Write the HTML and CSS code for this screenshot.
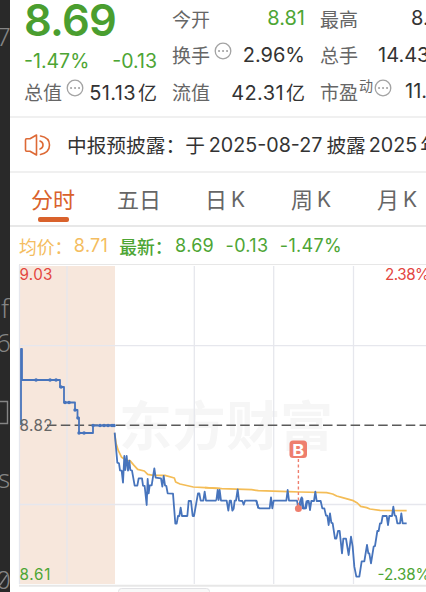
FILE: index.html
```html
<!DOCTYPE html>
<html lang="zh-CN">
<head>
<meta charset="utf-8">
<title>8.69</title>
<link rel="stylesheet" href="styles.css">
</head>
<body>
<svg class="strip" viewBox="0 0 10 592">
  <g class="code">
    <text x="-4" y="46">7</text>
    <text x="1" y="318">f</text>
    <text x="-4" y="352">6</text>
    <path d="M0 401.5H7.5V423.5H0"/>
    <text x="-2" y="488">s</text>
    <text x="-4" y="589">0</text>
    <path d="M0 585L7 575"/>
  </g>
</svg>
<main class="panel">
  <section class="quote">
    <div class="col first">
      <div class="price">8.69</div>
      <div class="row change"><span>-1.47%</span><span>-0.13</span></div>
      <div class="row"><span class="label">总值</span><svg class="more" viewBox="0 0 18 18"><circle cx="9" cy="9" r="7.8"/><path d="M5 9h.1M9 9h.1M13 9h.1"/></svg><span class="num end cap">51.13<i>亿</i></span></div>
    </div>
    <div class="col">
      <div class="row"><span class="label">今开</span><span class="num end green">8.81</span></div>
      <div class="row"><span class="label">换手</span><svg class="more" viewBox="0 0 18 18"><circle cx="9" cy="9" r="7.8"/><path d="M5 9h.1M9 9h.1M13 9h.1"/></svg><span class="num end">2.96%</span></div>
      <div class="row"><span class="label">流值</span><span class="num end cap">42.31<i>亿</i></span></div>
    </div>
    <div class="col">
      <div class="row"><span class="label wide">最高</span><span class="num high">8.</span></div>
      <div class="row"><span class="label wide">总手</span><span class="num volume">14.43</span></div>
      <div class="row"><span class="label">市盈</span><span class="sup">动</span><svg class="more tight" viewBox="0 0 18 18"><circle cx="9" cy="9" r="7.8"/><path d="M5 9h.1M9 9h.1M13 9h.1"/></svg><span class="num pe">11.</span></div>
    </div>
  </section>
  <section class="notice">
    <svg class="speaker" viewBox="0 0 28 24"><path d="M2.6 5.8Q1.5 5.8 1.5 7V17Q1.5 18.2 2.6 18.2H6L12.5 22V2L6 5.8ZM16 8Q19 9 19 12T16 16M16.5 3Q25.5 4.5 25.5 12T16.5 21.5"/></svg>
    <span class="news">中报预披露：</span><span class="news">于</span><span class="news date">2025-08-27</span><span class="news">披露</span><span class="news year">2025</span><span class="news">年</span>
  </section>
  <nav class="tabs">
    <span class="tab active">分时</span><span class="tab">五日</span><span class="tab">日<b>K</b></span><span class="tab">周<b>K</b></span><span class="tab">月<b>K</b></span>
  </nav>
  <section class="legend">
    <span class="avg">均价：</span><span class="avg value">8.71</span><span class="latest">最新：</span><span class="value">8.69</span><span class="value">-0.13</span><span class="value">-1.47%</span>
  </section>
  <svg class="chart" viewBox="10 264 416 328">
    <rect class="auction" x="19" y="266" width="96" height="318"/>
    <text class="watermark" x="119" y="446" textLength="214">东方财富</text>
    <path class="grid" d="M19.5 265V584M67 266V584M194.3 266V584M273.7 266V584M353.5 266V584M19 345.7H426M19 504.5H426"/>
    <path class="frame" d="M19 264.5H426"/>
    <path class="frame base" d="M19 585.7H426"/>
    <path class="dash" d="M47 425.3H426"/>
    <g class="average">
      <polyline transform="translate(105 380) scale(.33333)" points="29,160 33,190 40,212 50,232 58,237 65,242 75,242 85,254 98,268 118,273 128,283 145,286 180,286 208,294 212,306 225,312 265,321 300,323 345,326"/>
      <polyline transform="translate(215 380) scale(.33333)" points="-30,323 0,324 20,326 110,329 130,332 220,335 255,336"/>
      <polyline transform="translate(300 470) scale(.33333)" points="0,66 80,68 98,72 110,78 125,82 160,92 172,99 182,109 200,113 210,117 240,121 320,122"/>
    </g>
    <g class="price-line">
      <path d="M21 425V349H22V380H60V387H64V402.5H75V410H77.5V418H79V433H93V425.5H115"/>
      <path class="ticks" d="M36 380h.1M50 380h.1M56 380h.1M61 387h.1M65 402.5h.1M69 402.5h.1M75 410h.1M78 418h.1M79 433h.1M84 433h.1M93 425.5h.1M100 425.5h.1M104 425.5h.1M108 425.5h.1M112 425.5h.1M114 425.5h.1"/>
      <polyline transform="translate(105 380) scale(.33333)" points="29,158 37,248 42,250 45,271 50,272 54,308 58,228 61,270 65,228 69,272 73,242 76,270 81,272 89,317 97,317 101,295 111,295 114,317 119,318 125,375 128,297 131,340 134,316 140,316 148,265 152,293 168,295 172,320 176,288 180,316 184,318 188,340 204,341 211,431 215,431 219,408 223,408 227,383 231,408 247,408 251,363 258,363 263,408 267,408 279,340 283,340 287,362 295,362 299,335 303,362 334,362"/>
      <polyline transform="translate(215 380) scale(.33333)" points="4,362 8,330 11,360 14,330 18,362 35,362 40,392 44,362 48,362 52,392 56,386 59,362 63,362 68,328 72,362 82,363 86,374 90,362 124,362 130,385"/>
      <polyline transform="translate(215 380) scale(.33333)" points="124,362 130,383 134,385 164,385 168,352 172,385 176,362 214,362 218,330 222,362 246,362 250,385 256,362 260,352 263,385 270,385 275,362"/>
      <polyline transform="translate(300 470) scale(.33333)" points="0,115 7,85 10,115 18,115 22,93 26,93 30,120 34,93 42,93 46,65 50,93 62,93 67,115 73,115 78,137 82,137 86,165 90,130 94,158 98,160 105,206 109,206 114,183 119,183 126,250 130,206 138,206 146,255 153,200 158,230 163,290 169,320 178,320 185,274 193,274 201,225 205,250 208,250 213,280 221,230 225,228 232,183 236,183 240,160 244,160 248,138 260,138 264,165 268,138 276,138 280,110 284,136 288,138 292,160 300,160 304,130 308,160 320,160"/>
    </g>
    <path class="marker-line" d="M298.4 459V507"/>
    <circle class="marker" cx="298.4" cy="508.5" r="3.5"/>
    <rect class="marker" x="289.5" y="440.5" width="17.5" height="17.5" rx="3.5"/>
    <text class="marker-text" x="292.3" y="455.5" textLength="12" lengthAdjust="spacingAndGlyphs">B</text>
    <text class="scale red" x="19.5" y="280" textLength="33">9.03</text>
    <text class="scale red" x="385" y="280" textLength="45">2.38%</text>
    <text class="scale mid" x="19.5" y="430.5" textLength="33">8.82</text>
    <text class="scale low" x="19.5" y="580" textLength="31">8.61</text>
    <text class="scale low" x="377.5" y="580" textLength="53">-2.38%</text>
    <rect class="sheet" x="118.5" y="588.5" width="91" height="16" rx="3"/>
  </svg>
</main>
</body>
</html>
```
FILE: styles.css
```css
* { box-sizing: border-box; }
body {
  margin: 0;
  width: 426px;
  height: 592px;
  display: flex;
  overflow: hidden;
  background: #fff;
  color: #333;
  font-family: Inter, "Noto Sans CJK SC", sans-serif;
}
.strip { flex: none; width: 10px; height: 592px; background: #292929; }
.code text { font: 300 26px "Noto Sans", sans-serif; fill: #858585; }
.code path { fill: none; stroke: #858585; stroke-width: 1.4; }
.panel { width: 416px; flex: none; overflow: hidden; }

.quote {
  display: flex;
  gap: 15px;
  height: 118px;
  padding-left: 14px;
  border-bottom: 2px solid #f0f0f0;
  overflow: hidden;
}
.col { flex: none; width: 133px; }
.row { display: flex; align-items: center; height: 36.5px; white-space: nowrap; }
.price {
  height: 42px;
  line-height: 40px;
  font-size: 43.5px;
  font-weight: 600;
  letter-spacing: -0.8px;
  color: #4a9e2f;
}
.change { height: 37px; justify-content: space-between; color: #4da534; font-size: 19.5px; }
.first .row:last-child { height: 25px; }
.label { font-size: 19px; color: #666; }
.num { font-size: 20px; }
.num i { font-style: normal; font-size: 19px; margin-left: 2px; letter-spacing: 0; }
.cap { letter-spacing: 0.4px; }
.end { margin-left: auto; }
.green { color: #4da534; }
.more {
  flex: none;
  width: 18px;
  height: 18px;
  margin: -7px 0 0 4px;
  fill: none;
  stroke: #a3a3a3;
  stroke-width: 1.3;
}
.more path { stroke-width: 2; stroke-linecap: round; }
.more.tight { margin-left: 1px; }
.sup { font-size: 14px; color: #666; margin: -13px 0 0 1px; }
.high { margin-left: 53px; }
.volume { margin-left: 20px; }
.pe { margin-left: 13px; }

.notice {
  display: flex;
  align-items: center;
  height: 55px;
  padding-left: 14px;
  border-bottom: 2px solid #f0f0f0;
  white-space: nowrap;
}
.speaker {
  flex: none;
  width: 28px;
  height: 24px;
  margin-right: 15px;
  fill: none;
  stroke: #dd6935;
  stroke-width: 1.6;
  stroke-linejoin: round;
  stroke-linecap: round;
}
.news { font-size: 19.7px; }
.date { margin: 0 4px 0 4px; }
.year { margin: 0 3px 0 3px; }

.tabs {
  display: flex;
  height: 54px;
  border-bottom: 2px solid #e8e8e8;
  white-space: nowrap;
}
.tab {
  flex: none;
  width: 86px;
  height: 50px;
  display: flex;
  justify-content: center;
  align-items: center;
  gap: 4px;
  font-size: 22px;
  color: #666;
}
.tab b { font-weight: 400; font-size: 21px; padding-top: 2px; }
.active { flex-direction: column; gap: 0; color: #d9622c; padding-top: 9px; line-height: 34px; }
.active::after { content: ""; flex: none; width: 31px; height: 5px; border-radius: 2px; background: #d9622c; }

.legend {
  display: flex;
  align-items: center;
  height: 37px;
  padding-left: 9px;
  white-space: nowrap;
  font-size: 17.8px;
  color: #4da534;
}
.legend .value { margin: 0 10px 0 1.5px; font-size: 18px; letter-spacing: 0.3px; }
.legend .avg { color: #f4bd60; }
.latest { font-weight: 500; margin: 0 1px; }

.chart { display: block; width: 416px; height: 328px; }
.auction { fill: #f7e7dc; }
.watermark { font: 700 53px "Noto Sans CJK SC", sans-serif; fill: #f6f6f6; }
.grid { stroke: #e6e7ed; stroke-width: 1.3; }
.frame { stroke: #e7e7e7; }
.base { stroke-width: 2; }
.dash { stroke: #5a5a5a; stroke-width: 1.5; stroke-dasharray: 9.5 4.3; }
.average, .price-line { fill: none; stroke-linejoin: round; }
.average { stroke: #f4bd57; }
.price-line { stroke: #4774bc; }
.average polyline { stroke-width: 5.2; }
.price-line polyline { stroke-width: 5.4; }
.price-line path { stroke-width: 1.8; }
.price-line .ticks { stroke-width: 3.4; stroke-linecap: round; }
.marker { fill: #ee7e6d; }
.marker-line { stroke: #ee7e6d; stroke-width: 1.4; stroke-dasharray: 3 2.5; }
.marker-text { font: 700 16px Inter, sans-serif; fill: #fff; }
.scale { font: 400 15.2px Inter, sans-serif; }
.red { fill: #e3463f; }
.mid { fill: #666; }
.low { fill: #4da534; }
.sheet { fill: #f8f8f8; stroke: #e2e2e5; }
```
